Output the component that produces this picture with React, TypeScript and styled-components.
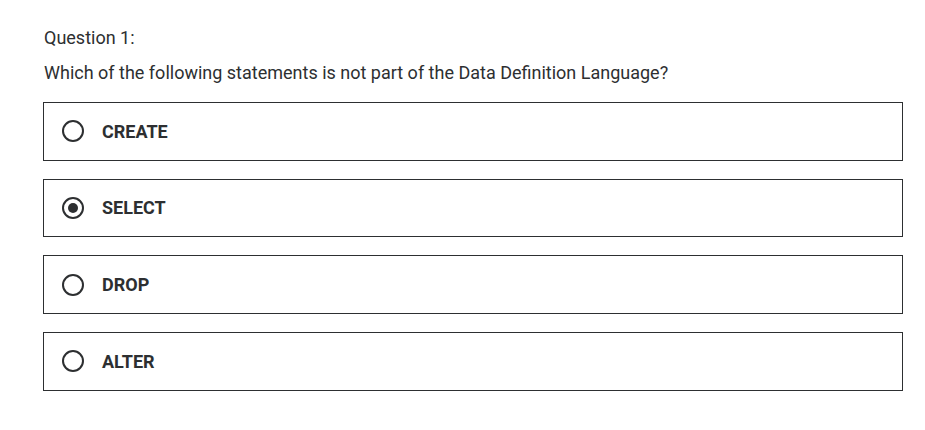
import { useState } from "react";
import styled, { createGlobalStyle } from "styled-components";

const GlobalStyle = createGlobalStyle`
  body {
    margin: 0;
    background: #ffffff;
    font-family: Roboto, "Liberation Sans", Arial, sans-serif;
    color: #2d2f31;
  }
`;

const options = ["CREATE", "SELECT", "DROP", "ALTER"];

const App = () => {
  const [selected, setSelected] = useState<number>(1);

  return (
    <>
      <GlobalStyle />
      <Wrapper>
        <Label>Question 1:</Label>
        <Prompt>Which of the following statements is not part of the Data Definition Language?</Prompt>
        <List>
          {options.map((text, i) => (
            <Option key={text} onClick={() => setSelected(i)}>
              <Radio $checked={selected === i} />
              <OptionText>{text}</OptionText>
            </Option>
          ))}
        </List>
      </Wrapper>
    </>
  );
};

const Wrapper = styled.div`
  width: 860px;
  padding: 27px 0 0 43px;
`;

const Label = styled.div`
  font-size: 18px;
  line-height: 22px;
  padding-left: 1px;
`;

const Prompt = styled.div`
  font-size: 18px;
  line-height: 22px;
  margin-top: 13px;
  padding-left: 1px;
`;

const List = styled.div`
  display: flex;
  flex-direction: column;
  gap: 18px;
  margin-top: 18px;
`;

const Option = styled.label`
  display: flex;
  align-items: center;
  height: 56.67px;
  border: 1px solid #2d2f31;
  padding-left: 18px;
  cursor: pointer;
`;

const Radio = styled.span<{ $checked: boolean }>`
  position: relative;
  box-sizing: border-box;
  width: 22px;
  height: 22px;
  border: 2px solid #2d2f31;
  border-radius: 50%;
  flex-shrink: 0;
  &::after {
    content: "";
    display: ${({ $checked }) => ($checked ? "block" : "none")};
    position: absolute;
    top: 4px;
    left: 4px;
    width: 10px;
    height: 10px;
    border-radius: 50%;
    background: #2d2f31;
  }
`;

const OptionText = styled.span`
  margin-left: 18px;
  font-size: 18px;
  font-weight: 700;
`;

export default App;
